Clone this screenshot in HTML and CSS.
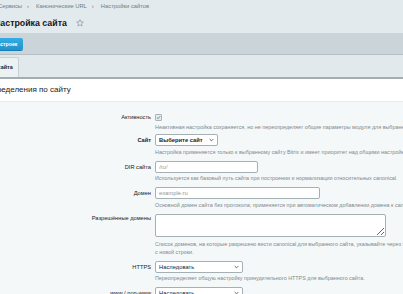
FILE: index.html
```html
<!DOCTYPE html>
<html lang="ru">
<head>
    <meta charset="UTF-8">
    <title>Настройка сайта</title>
    <link rel="stylesheet" href="styles.css">
</head>
<body>
    <div class="top">
        <div class="crumbs">
            <span>Сервисы</span><span class="sep">›</span>
            <span>Канонические URL</span><span class="sep">›</span>
            <span>Настройки сайтов</span>
        </div>
        <h1 class="title">
            <span>Настройка сайта</span>
            <svg class="star" viewBox="0 0 10 10" width="8" height="8"><path d="M5 0.8 L6.2 3.6 L9.2 3.8 L6.9 5.8 L7.6 8.8 L5 7.2 L2.4 8.8 L3.1 5.8 L0.8 3.8 L3.8 3.6 Z" fill="none" stroke="#8a969b" stroke-width="0.9"/></svg>
        </h1>
    </div>

    <div class="toolbar">
        <a class="btn">Список настроек</a>
    </div>

    <div class="tabs">
        <div class="tab">Настройка сайта</div>
    </div>

    <div class="section-head">Переопределения по сайту</div>

    <div class="form">
        <div class="row row-check">
            <div class="lbl">Активность</div>
            <div class="field">
                <span class="checkbox">
                    <svg viewBox="0 0 8 8" width="7" height="7"><path d="M1.5 4.2 L3.3 5.9 L6.6 2" fill="none" stroke="#3f4a4f" stroke-width="1"/></svg>
                </span>
                <div class="hint">Неактивная настройка сохраняется, но не переопределяет общие параметры модуля для выбранного сайта.</div>
            </div>
        </div>

        <div class="row">
            <div class="lbl bold">Сайт</div>
            <div class="field">
                <div class="select w-site bold"><span>Выберите сайт</span><svg class="caret" viewBox="0 0 6 4" width="5" height="4"><path d="M0.8 0.8 L3 3 L5.2 0.8" fill="none" stroke="#333" stroke-width="0.9"/></svg></div>
                <div class="hint">Настройка применяется только к выбранному сайту Bitrix и имеет приоритет над общими настройками модуля.</div>
            </div>
        </div>

        <div class="row">
            <div class="lbl">DIR сайта</div>
            <div class="field">
                <input class="input w-dir italic" placeholder="/ru/">
                <div class="hint">Используется как базовый путь сайта при построении и нормализации относительных canonical.</div>
            </div>
        </div>

        <div class="row">
            <div class="lbl">Домен</div>
            <div class="field">
                <input class="input w-domain" placeholder="example.ru">
                <div class="hint">Основной домен сайта без протокола; применяется при автоматическом добавлении домена к canonical.</div>
            </div>
        </div>

        <div class="row">
            <div class="lbl lbl-top">Разрешённые домены</div>
            <div class="field">
                <textarea class="area"></textarea>
                <div class="hint hint-area">Список доменов, на которые разрешено вести canonical для выбранного сайта, указывайте через запятую или<br>с новой строки.</div>
            </div>
        </div>

        <div class="row">
            <div class="lbl">HTTPS</div>
            <div class="field">
                <div class="select w-mode"><span>Наследовать</span><svg class="caret" viewBox="0 0 6 4" width="5" height="4"><path d="M0.8 0.8 L3 3 L5.2 0.8" fill="none" stroke="#333" stroke-width="0.9"/></svg></div>
                <div class="hint">Переопределяет общую настройку принудительного HTTPS для выбранного сайта.</div>
            </div>
        </div>

        <div class="row">
            <div class="lbl">www / non-www</div>
            <div class="field">
                <div class="select w-mode"><span>Наследовать</span><svg class="caret" viewBox="0 0 6 4" width="5" height="4"><path d="M0.8 0.8 L3 3 L5.2 0.8" fill="none" stroke="#333" stroke-width="0.9"/></svg></div>
            </div>
        </div>
    </div>
</body>
</html>
```

FILE: styles.css
```css
body {
    margin: 0;
    font-family: "Liberation Sans", Arial, sans-serif;
    background: #f5f8f8;
    color: #1e1e1e;
    overflow: hidden;
}
.top {
    background: #e3eaed;
    height: 33px;
    padding-top: 3px;
    box-sizing: border-box;
}
.crumbs {
    display: flex;
    align-items: center;
    margin-left: -2px;
    font-size: 5.8px;
    line-height: 7px;
    color: #6f7c82;
    white-space: nowrap;
}
.crumbs .sep {
    padding: 0 7px 0 5px;
    font-size: 6px;
}
.title {
    display: flex;
    align-items: center;
    gap: 9px;
    margin: 7px 0 0 -6px;
    font-size: 8.8px;
    line-height: 12px;
    font-weight: bold;
    color: #161616;
    white-space: nowrap;
}
.toolbar {
    height: 21px;
    background: #cbd4d8;
    border-bottom: 1px solid #b3bec2;
    display: flex;
    align-items: center;
}
.btn {
    display: block;
    margin-left: -32px;
    height: 12px;
    line-height: 12px;
    padding: 0 6px;
    border-radius: 2px;
    background: linear-gradient(#34ade4, #1f92cd);
    color: #fff;
    font-size: 5.2px;
    font-weight: bold;
    white-space: nowrap;
    box-shadow: 0 1px 0 #1a7eb2;
}
.tabs {
    height: 22px;
    background: #e1e9ec;
    border-bottom: 2px solid #a3aeb2;
    display: flex;
    align-items: flex-end;
}
.tab {
    margin-left: -38px;
    height: 19px;
    line-height: 19px;
    padding: 0 5px;
    background: #ecf1f2;
    border: 1px solid #c7d0d3;
    border-bottom: none;
    border-radius: 2px 2px 0 0;
    font-size: 5.4px;
    font-weight: bold;
    color: #222;
    white-space: nowrap;
}
.section-head {
    height: 22px;
    line-height: 22px;
    background: #fff;
    border-bottom: 1px solid #e6ebec;
    margin-left: -31px;
    font-size: 8px;
    color: #222;
    white-space: nowrap;
}
.form {
    padding-top: 12px;
}
.row {
    display: flex;
    margin-bottom: 4.5px;
}
.row-check {
    margin-bottom: 3px;
}
.lbl {
    width: 152px;
    flex-shrink: 0;
    box-sizing: border-box;
    padding-right: 1px;
    text-align: right;
    font-size: 5.7px;
    line-height: 12px;
    color: #222;
    white-space: nowrap;
}
.row-check .lbl {
    line-height: 7px;
}
.lbl-top {
    line-height: 9px;
}
.bold {
    font-weight: bold;
}
.field {
    flex: 1;
    min-width: 0;
    padding-left: 3px;
}
.hint {
    margin-top: 2.5px;
    font-size: 5.4px;
    line-height: 7.5px;
    color: #7d898e;
    white-space: nowrap;
}
.hint-area {
    margin-top: 4.5px;
}
.checkbox {
    display: flex;
    align-items: center;
    justify-content: center;
    width: 7px;
    height: 7px;
    box-sizing: border-box;
    border: 1px solid #a9b4b8;
    border-radius: 1px;
    background: #e6ecee;
}
.select,
.input {
    display: flex;
    align-items: center;
    justify-content: space-between;
    height: 12px;
    box-sizing: border-box;
    padding: 0 3px;
    border: 1px solid #a5b0b4;
    border-radius: 2px;
    background: #fff;
    font-family: inherit;
    font-size: 5.8px;
    color: #222;
    margin: 0;
}
.input::placeholder {
    color: #8d979b;
}
.italic::placeholder {
    font-style: italic;
}
.w-site {
    width: 63px;
}
.w-dir {
    width: 103px;
}
.w-domain {
    width: 165px;
}
.w-mode {
    width: 88px;
}
.area {
    display: block;
    width: 231px;
    height: 23px;
    box-sizing: border-box;
    margin: 0;
    border: 1px solid #a5b0b4;
    border-radius: 2px;
    background: #fff;
}
```
